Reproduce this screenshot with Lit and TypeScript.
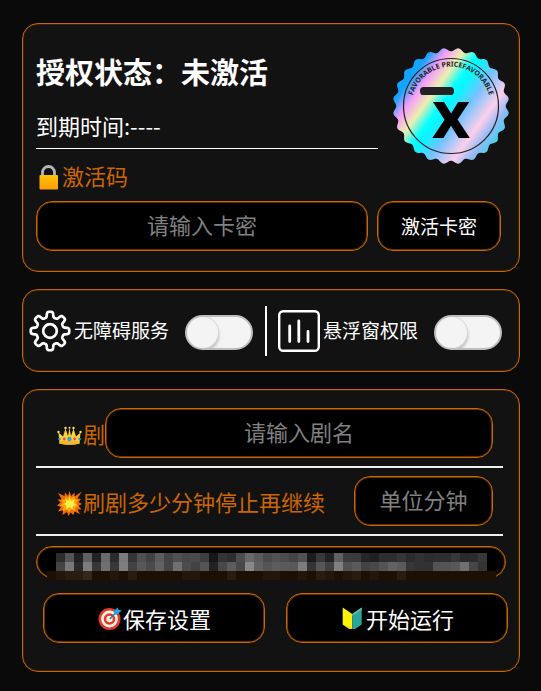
import { LitElement, html, svg, css } from "lit";
import { customElement } from "lit/decorators.js";

/** Closed path around (cx, cy) whose radius follows r(angle). */
function polarPath(cx: number, cy: number, r: (a: number) => number): string {
  const points: string[] = [];
  for (let i = 0; i < 360; i++) {
    const a = (i * Math.PI) / 180;
    points.push(`${(cx + r(a) * Math.cos(a)).toFixed(2)} ${(cy + r(a) * Math.sin(a)).toFixed(2)}`);
  }
  return `M${points.join("L")}Z`;
}

const sealPath = polarPath(58, 58, (a) => 56.4 - 1.7 * Math.cos(24 * a));
const gearPath = polarPath(21, 21, (a) => 16.5 + 2.8 * Math.tanh(2.4 * Math.cos(8 * a)));

// Grey levels of the masked text, then the brown strip under it.
const upper = "2c 55 20 60 22 6a 2c 7a 34 50 42 5c 44 50 48 4a 3e 16 34 2e 4c 68 5a 4a 52 4c 44 52 1c 38 22 60 3c 3a 26 20 2e 2e 36 2c 32 2c 2e 2e 38 2a 2c 38".split(" ");
const lower = "44 78 2a 7c 36 70 38 7e 42 58 4a 62 46 70 4c 42 54 22 48 5c 48 88 60 54 5c 5a 58 7c 34 56 40 80 52 5a 42 48 54 62 5a 36 32 32 54 54 58 70 46 34".split(" ");
const strip = "01223001020000011000200011001021012010020000000000".split("");
const browns = ["#1c1003", "#22170a", "#2a1d10", "#35281b"];

const seal = html`<svg class="seal" viewBox="0 0 116 116" role="img" aria-label="FAVORABLE PRICE">
  <defs>
    <linearGradient id="holo" gradientUnits="userSpaceOnUse" x1="11" y1="24" x2="105" y2="92">
      <stop offset="0.08" stop-color="#12a4ff" />
      <stop offset="0.19" stop-color="#f49cfb" />
      <stop offset="0.31" stop-color="#eeeeb0" />
      <stop offset="0.42" stop-color="#08ffff" />
      <stop offset="0.48" stop-color="#08f6ff" />
      <stop offset="0.62" stop-color="#76c2ff" />
      <stop offset="0.79" stop-color="#fccfeb" />
      <stop offset="0.9" stop-color="#93b9f6" />
      <stop offset="0.98" stop-color="#4ccff0" />
    </linearGradient>
    <path id="arc" d="M19 65A39.600 39.600 0 1 1 97 65" />
  </defs>
  <path d=${sealPath} fill="url(#holo)" />
  <circle cx="58" cy="58" r="47.5" fill="none" stroke="#222" stroke-width="1.2" />
  <text class="seal-text"><textPath href="#arc" startOffset="50%" text-anchor="middle">FAVORABLE PRICEFAVORABLE</textPath></text>
  <rect x="27" y="39" width="34" height="8" rx="3.6" fill="#222" />
  <text class="seal-x" x="58" y="90" text-anchor="middle">x</text>
</svg>`;

const gear = html`<svg class="icon" viewBox="0 0 42 42" aria-hidden="true">
  <path d=${gearPath} fill="none" stroke="#fff" stroke-width="2.7" stroke-linejoin="round" />
  <circle cx="21" cy="21" r="6.800" fill="none" stroke="#fff" stroke-width="2.7" />
</svg>`;

const chart = html`<svg class="icon" viewBox="0 0 42 42" aria-hidden="true">
  <rect x="1.2" y="1.2" width="39.6" height="39.6" rx="4" fill="none" stroke="#fff" stroke-width="2.4" />
  <path d="M11.7 16V31.5M20.8 11V31.5M30 21.500V31.5" fill="none" stroke="#fff" stroke-width="2.8" stroke-linecap="round" />
</svg>`;

const lock = html`<svg class="emoji" viewBox="0 0 25 25" aria-hidden="true">
  <defs><linearGradient id="brass" x2="0" y2="1"><stop stop-color="#ffc400" /><stop offset="1" stop-color="#ff9d0a" /></linearGradient></defs>
  <path d="M6.500 11V7.500a6 6 0 0 1 12 0V11" fill="none" stroke="#b3b5b6" stroke-width="2.8" />
  <rect x="3.500" y="10" width="18.500" height="14.500" rx="1" fill="url(#brass)" />
</svg>`;

const crown = html`<svg class="emoji" viewBox="0 0 25 25" aria-hidden="true">
  <path d="M2.500 20.500L1.500 9.500L6 13.500L8.500 5.500L11 13L12.500 5L14 13L16.500 5.500L19 13.500L23.500 9.500L22.500 20.500Q12.500 23 2.500 20.500Z" fill="#fdd32f" />
  <path d="M2.500 18.500Q12.500 16.500 22.500 18.500V20.800Q12.500 22.500 2.500 20.800Z" fill="#f9b42a" />
  <g fill="#fde45a"><circle cx="1.500" cy="9" r="1.200" /><circle cx="8.500" cy="5" r="1.200" /><circle cx="12.500" cy="4.800" r="1" /><circle cx="16.500" cy="5" r="1.200" /><circle cx="23.500" cy="9" r="1.200" /></g>
  <g fill="#26a6e0"><circle cx="12.500" cy="16" r="2.200" /><circle cx="2.500" cy="16" r="1.300" /><circle cx="22.500" cy="16" r="1.300" /></g>
  <g fill="#e8467c"><circle cx="7.300" cy="16" r="1.400" /><circle cx="17.700" cy="16" r="1.400" /></g>
</svg>`;

const burst = html`<svg class="emoji" viewBox="0 0 25 25" aria-hidden="true">
  <path d="M12.500 0L14 5L17.500 1.500L17.600 5.500L24.800 .5L20.500 7.500L24 8L21.500 11L25 13L21.500 14.800L24.500 18.500L20.500 18.500L23 23L17.500 20.500L16.500 24L13.500 21.500L11.500 25L10 21L5.500 24L6 19.500L1 20.500L4 16L0 14.500L3.500 11.500L.5 8.500L4.800 8.500L1 2L7.500 5L8 1.500L11 5Z" fill="#f06a0a" />
  <path d="M12.500 3.500L14.300 7L17.500 5L18 8.500L21.500 9L19 12.300L21.500 15.500L18 16.500L18.500 20L14.500 18.500L12 21.500L10 18.500L6 20L6.500 16L3 14.500L6 12L4 8.500L8 8.500L8.500 5.500L11 7Z" fill="#ffa30f" />
  <path d="M12.500 6L14 10L18 8L16.500 12L20 14L15.800 15L15.500 18.500L12.500 16L9 18.500L9.500 14.500L6 13L9.500 11.500L8 8L11.500 10Z" fill="#fff043" />
</svg>`;

const target = html`<svg class="emoji" viewBox="0 0 25 25" aria-hidden="true">
  <circle cx="12.500" cy="13" r="11" fill="#e5392f" />
  <circle cx="12.500" cy="13" r="8.400" fill="#fff4e0" />
  <circle cx="12.500" cy="13" r="5.800" fill="#e5392f" />
  <circle cx="12.500" cy="13" r="3.200" fill="#fff4e0" />
  <path d="M12.800 13L19 6.500" stroke="#1b7fae" stroke-width="1.600" />
  <path d="M16.800 5.500L20.500 1.500L21.500 3.800L24.700 4.500L20 8.800L17 8.600Z" fill="#1aa9e0" />
</svg>`;

const sprout = html`<svg class="emoji" viewBox="0 0 25 25" aria-hidden="true">
  <path d="M2.700 1.500L12.200 8V23H9.500L2.700 18.500Z" fill="#fff10a" />
  <path d="M2.700 18.500L12.200 22V23H9.500Z" fill="#ffd500" />
  <path d="M21.700 1.500L12.200 8V23H15L21.700 18.500Z" fill="#2ca599" />
  <path d="M21.700 1.500L12.200 8V10L21.700 4Z" fill="#56bdb2" />
</svg>`;

const cell = (x: number, y: number, fill: string) =>
  svg`<rect x=${x} y=${y} width="9" height="9" fill=${fill} />`;

@customElement("app-root")
export class AppRoot extends LitElement {
  static styles = css`
    :host {
      --edge: #cc6600;
      box-sizing: border-box;
      display: flex;
      flex-direction: column;
      gap: 17px;
      min-height: 100vh;
      padding: 23px 21px 19px 22px;
      background: #0a0a0a;
      color: #fff;
      font: 22px/26px "Noto Sans CJK SC", sans-serif;
    }
    * { box-sizing: border-box; }
    .card {
      border: 1px solid var(--edge);
      border-radius: 16px;
      background: #121212;
      box-shadow: inset 0 0 0 1px rgba(204, 102, 0, 0.2);
    }
    .head {
      display: flex;
      align-items: flex-end;
      gap: 15px;
      padding: 22px 10px 0 13px;
    }
    .info { flex: 1; min-width: 0; padding-bottom: 15px; }
    .title {
      margin: 0 0 10px;
      font-size: 29px;
      line-height: 50px;
      font-weight: 700;
    }
    .expiry {
      margin: 0;
      padding-bottom: 4px;
      border-bottom: 1px solid #fff;
      line-height: 38px;
    }
    .seal { width: 116px; height: 116px; flex: none; }
    .seal-text { font: 700 7px "Noto Sans", sans-serif; fill: #222; }
    .seal-x { font: 700 66px "Open Sans", sans-serif; fill: #000; }
    .label {
      display: flex;
      align-items: center;
      color: var(--edge);
      white-space: nowrap;
    }
    .label span { line-height: 22px; padding-bottom: 4px; }
    .code-label { padding: 0 13px; }
    .emoji { width: 25px; height: 25px; flex: none; margin-right: 1px; }
    .code-row {
      display: flex;
      gap: 9px;
      padding: 11px 18px 20px 13px;
    }
    .field, .button {
      height: 50px;
      margin: 0;
      padding: 0 0 5px;
      border: 1px solid var(--edge);
      border-radius: 16px;
      box-shadow: inset 0 0 0 1px rgba(204, 102, 0, 0.5);
      background: #000;
      color: #fff;
      font: inherit;
      text-align: center;
      outline: none;
    }
    .field { flex: 1; min-width: 0; }
    .field::placeholder { color: #808080; opacity: 1; }
    .button {
      display: flex;
      align-items: center;
      justify-content: center;
      padding: 0;
    }
    .activate { width: 124px; font-size: 19px; }
    .switches {
      display: grid;
      grid-template-columns: 1fr 3px 1fr;
      align-items: center;
      gap: 11px;
      padding: 16px 17px 15px 6px;
    }
    .option {
      display: flex;
      align-items: center;
      gap: 3px;
      font-size: 19px;
      white-space: nowrap;
    }
    .option span { padding-bottom: 2px; }
    .icon { width: 42px; height: 42px; flex: none; }
    .divider { height: 50px; border-right: 2px solid #fff; }
    .switch {
      appearance: none;
      width: 68px;
      height: 35px;
      margin: 3px 0 0 auto;
      border: 2px solid #bdbdbd;
      border-radius: 18px;
      background: #f4f4f4;
      flex: none;
      overflow: hidden;
    }
    .switch::before {
      content: "";
      display: block;
      width: 31px;
      height: 31px;
      border-radius: 50%;
      background: #f4f4f4;
      box-shadow: 0 0 1px 1px #d8d8d8, 1px 3px 3px #bbb;
    }
    .switch:checked { background: var(--edge); }
    .switch:checked::before { margin-left: auto; }
    .settings { padding-bottom: 28px; }
    .rows { margin: 10px 16px 0 13px; }
    .row {
      display: flex;
      align-items: center;
      padding: 8px 10px 8px 21px;
      border-bottom: 2px solid #f0f0f0;
    }
    .row .label { padding-top: 4px; }
    .minutes { flex: none; width: 139px; margin-left: auto; }
    .masked {
      height: 32px;
      margin: 10px 13px 15px;
      border: 1px solid var(--edge);
      border-radius: 16px;
      box-shadow: inset 0 0 0 1px rgba(204, 102, 0, 0.5);
      background: #000;
      padding: 6px 9px 0 10px;
    }
    .mosaic { display: block; width: 100%; height: 27px; }
    .actions {
      display: grid;
      grid-template-columns: 1fr 1fr;
      gap: 21px;
      padding: 0 11px 0 20px;
    }
  `;

  render() {
    return html`
      <section class="card">
        <div class="head">
          <div class="info">
            <h1 class="title">授权状态：未激活</h1>
            <p class="expiry">到期时间:----</p>
          </div>
          ${seal}
        </div>
        <label class="label code-label" for="code">${lock}<span>激活码</span></label>
        <div class="code-row">
          <input class="field" id="code" type="text" placeholder="请输入卡密" />
          <button class="button activate" type="button">激活卡密</button>
        </div>
      </section>

      <section class="card switches">
        <label class="option">${gear}<span>无障碍服务</span><input class="switch" type="checkbox" role="switch" /></label>
        <div class="divider"></div>
        <label class="option">${chart}<span>悬浮窗权限</span><input class="switch" type="checkbox" role="switch" /></label>
      </section>

      <section class="card settings">
        <div class="rows">
          <div class="row">
            <label class="label" for="drama">${crown}<span>剧</span></label>
            <input class="field" id="drama" type="text" placeholder="请输入剧名" />
          </div>
          <div class="row">
            <label class="label" for="minutes">${burst}<span>刷剧多少分钟停止再继续</span></label>
            <input class="field minutes" id="minutes" type="text" placeholder="单位分钟" />
          </div>
        </div>
        <div class="masked">
          <svg class="mosaic" viewBox="0 0 450 27" preserveAspectRatio="none" shape-rendering="crispEdges" aria-hidden="true">
            ${upper.map((v, i) => cell(9 + i * 9, 0, `#${v}${v}${v}`))}
            ${lower.map((v, i) => cell(9 + i * 9, 9, `#${v}${v}${v}`))}
            ${strip.map((v, i) => cell(i * 9, 18, browns[Number(v)]))}
          </svg>
        </div>
        <div class="actions">
          <button class="button" type="button">${target}保存设置</button>
          <button class="button" type="button">${sprout}开始运行</button>
        </div>
      </section>
    `;
  }
}
